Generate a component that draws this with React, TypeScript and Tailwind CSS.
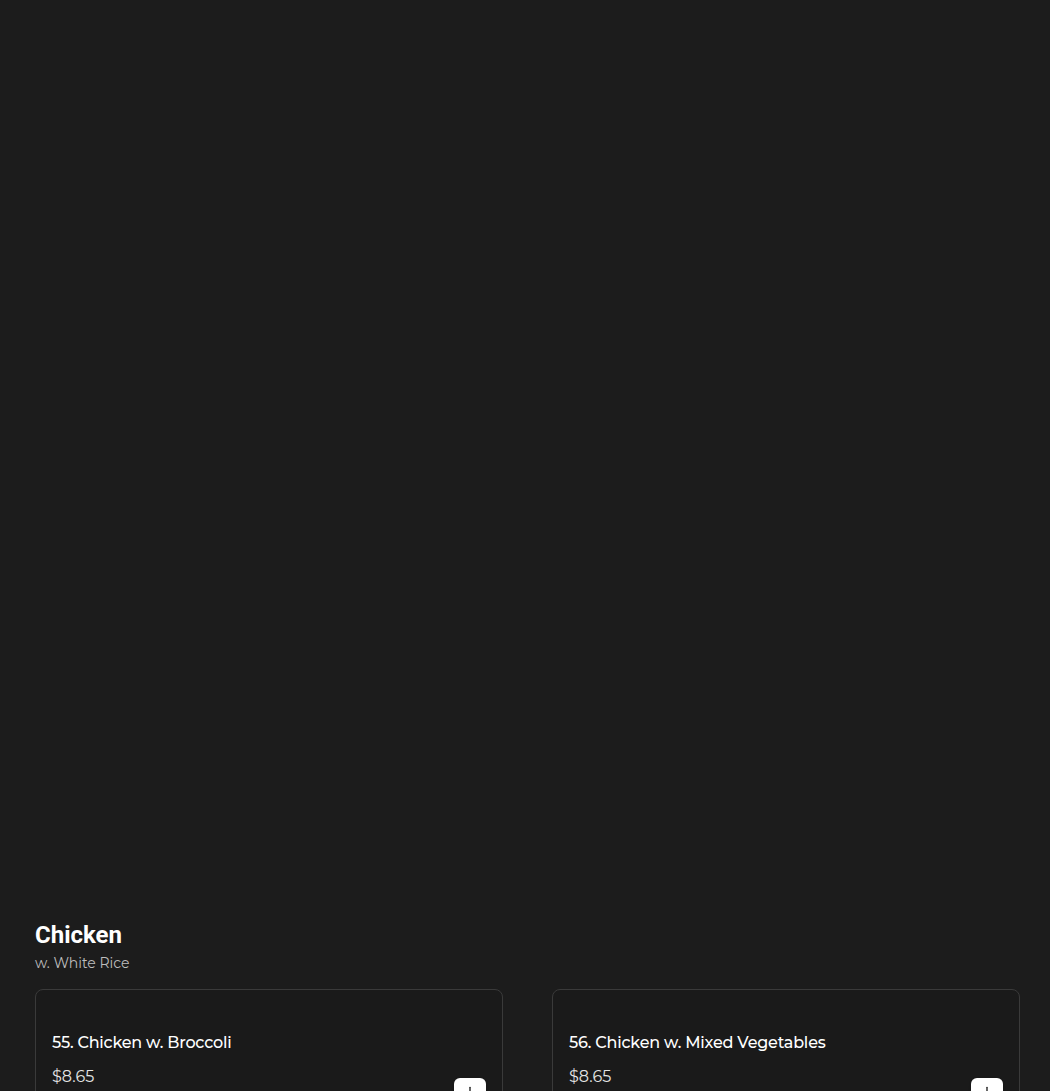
import { Plus } from 'lucide-react'

const items = [
  { name: '55. Chicken w. Broccoli', price: '$8.65' },
  { name: '56. Chicken w. Mixed Vegetables', price: '$8.65' },
]

function ItemCard({ name, price }: { name: string; price: string }) {
  return (
    <div className="relative h-[140px] rounded-lg border border-[#3a3a3a] bg-[#1a1a1a] px-4 pt-[43px]">
      <h3 className="font-['Montserrat','Open_Sans',sans-serif] text-[16px] font-medium leading-5 tracking-[-0.2px] text-white">
        {name}
      </h3>
      <p className="mt-[14px] font-['Montserrat','Open_Sans',sans-serif] text-[16px] leading-5 text-[#e6e6e6]">
        {price}
      </p>
      <button className="absolute right-4 top-[88px] flex h-8 w-8 items-start justify-center rounded-md bg-white pt-[6px] text-[#1c1c1c] shadow">
        <Plus size={16} strokeWidth={2} />
      </button>
    </div>
  )
}

export default function App() {
  return (
    <div className="min-h-[1091px] overflow-hidden bg-[#1c1c1c]">
      <div className="h-[921px]" />
      <section className="pl-[35px] pr-[30px]">
        <h2 className="font-['Roboto',sans-serif] text-[24px] font-bold leading-7 text-white">Chicken</h2>
        <p className="mt-[4px] font-['Montserrat','Open_Sans',sans-serif] text-[14px] leading-5 text-[#bdbdbd]">
          w. White Rice
        </p>
        <div className="mt-[16px] grid grid-cols-2 gap-[49px]">
          {items.map(item => (
            <ItemCard key={item.name} {...item} />
          ))}
        </div>
      </section>
    </div>
  )
}
